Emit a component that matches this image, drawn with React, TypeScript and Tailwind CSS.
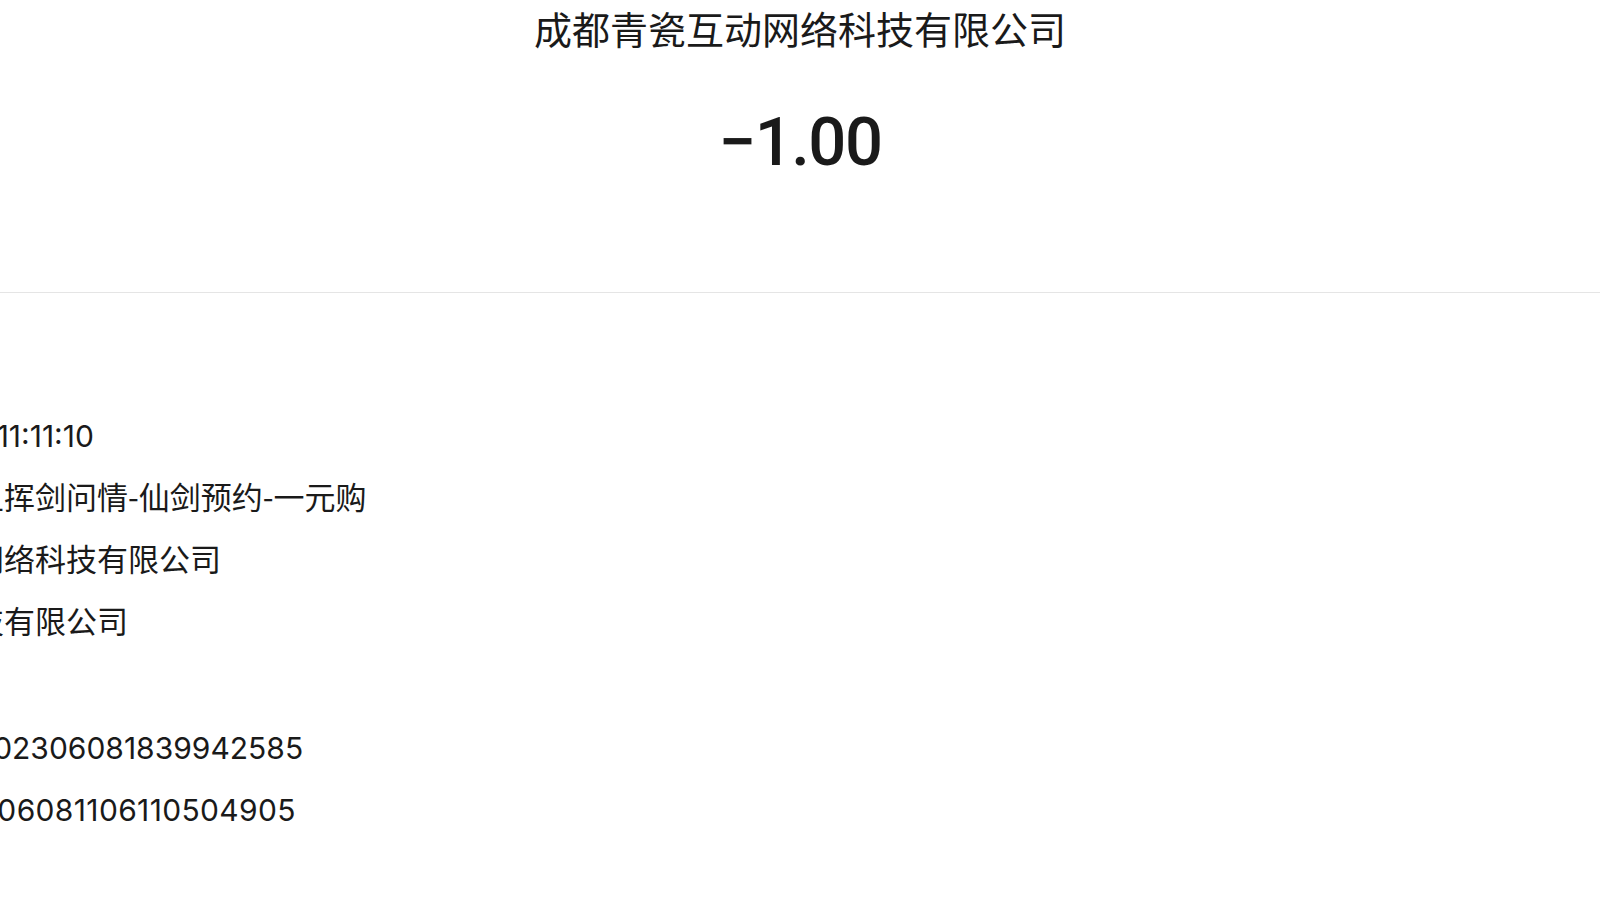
const ROWS = [
  { value: "2023年6月8日\u00a011:11:10", cjk: false },
  { value: "仙剑奇侠传之且挥剑问情-仙剑预约-一元购", cjk: true },
  { value: "成都青瓷互动网络科技有限公司", cjk: true },
  { value: "财付通支付科技有限公司", cjk: true },
  { value: "", cjk: false },
  { value: "4200002845202306081839942585", cjk: false },
  { value: "4200002846206081106110504905", cjk: false },
];

export default function App() {
  return (
    <div className="h-[898px] w-full overflow-hidden bg-white text-[#1a1a1a]">
      <div className="flex flex-col items-center">
        <h1 className="mt-[2px] text-[38px] leading-[52px] font-normal font-['Noto_Sans_CJK_SC',sans-serif]">
          成都青瓷互动网络科技有限公司
        </h1>
        <p className="mt-[43px] text-[67px] leading-[90px] font-medium tracking-[-1.5px] font-['Roboto',sans-serif]">
          −1.00
        </p>
      </div>

      <div className="mt-[105px] h-px w-full bg-[#e5e5e5]" />

      {/* detail list, label column sits off to the left */}
      <div className="mt-[112px] -ml-[213px] flex flex-col whitespace-nowrap">
        {ROWS.map((row, i) => (
          <div
            key={i}
            className={`flex items-center ${i === 4 ? "h-[64px]" : "h-[62px]"} ${
              row.cjk
                ? "pb-[4px] text-[31px] font-['Noto_Sans_CJK_SC',sans-serif]"
                : "text-[30px] font-['Inter','Noto_Sans_CJK_SC',sans-serif]"
            } ${i === 6 ? "tracking-[0.35px]" : ""}`}
          >
            {row.value}
          </div>
        ))}
      </div>
    </div>
  );
}
